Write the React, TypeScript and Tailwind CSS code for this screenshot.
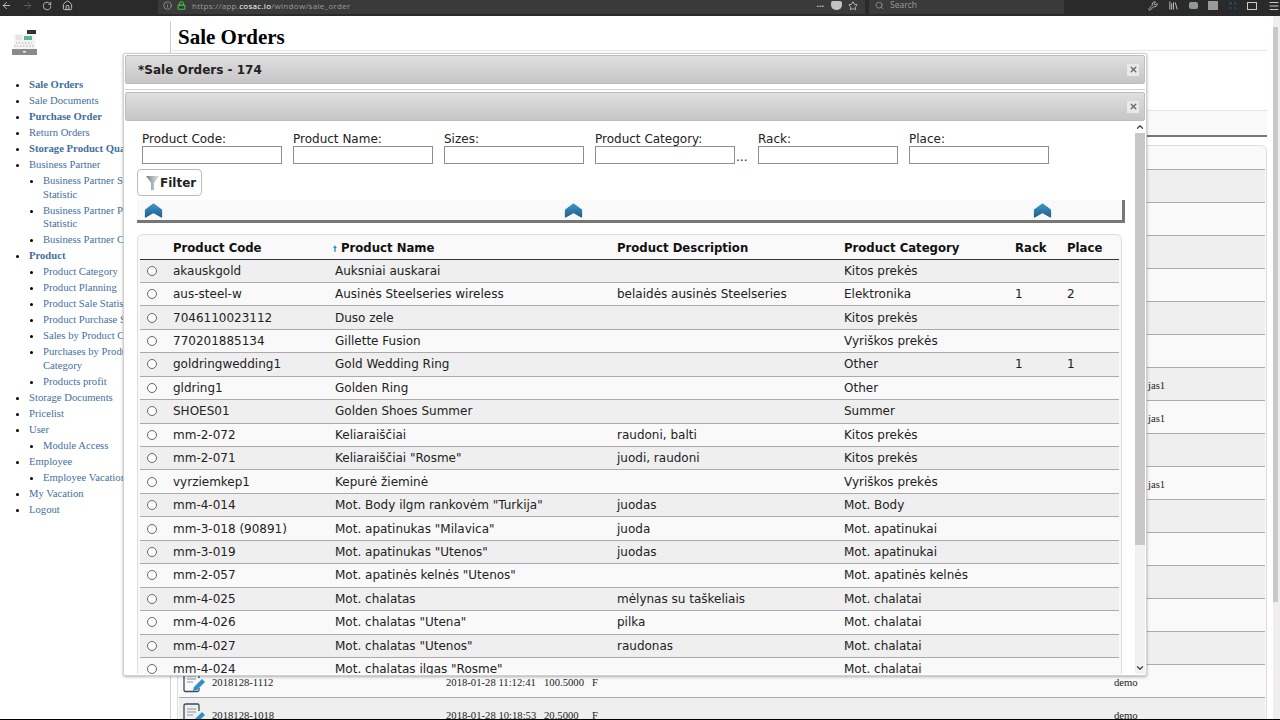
import { ArrowLeft, ArrowRight, ChevronDown, ChevronUp, Home, Info, Library, Lock, Menu, RotateCw, Search, Star, Wrench, X } from "lucide-react";

const products = [
  ["akauskgold", "Auksniai auskarai", "", "Kitos prekės", "", ""],
  ["aus-steel-w", "Ausinės Steelseries wireless", "belaidės ausinės Steelseries", "Elektronika", "1", "2"],
  ["7046110023112", "Duso zele", "", "Kitos prekės", "", ""],
  ["770201885134", "Gillette Fusion", "", "Vyriškos prekės", "", ""],
  ["goldringwedding1", "Gold Wedding Ring", "", "Other", "1", "1"],
  ["gldring1", "Golden Ring", "", "Other", "", ""],
  ["SHOES01", "Golden Shoes Summer", "", "Summer", "", ""],
  ["mm-2-072", "Keliaraiščiai", "raudoni, balti", "Kitos prekės", "", ""],
  ["mm-2-071", "Keliaraiščiai \"Rosme\"", "juodi, raudoni", "Kitos prekės", "", ""],
  ["vyrziemkep1", "Kepurė žieminė", "", "Vyriškos prekės", "", ""],
  ["mm-4-014", "Mot. Body ilgm rankovėm \"Turkija\"", "juodas", "Mot. Body", "", ""],
  ["mm-3-018 (90891)", "Mot. apatinukas \"Milavica\"", "juoda", "Mot. apatinukai", "", ""],
  ["mm-3-019", "Mot. apatinukas \"Utenos\"", "juodas", "Mot. apatinukai", "", ""],
  ["mm-2-057", "Mot. apatinės kelnės \"Utenos\"", "", "Mot. apatinės kelnės", "", ""],
  ["mm-4-025", "Mot. chalatas", "mėlynas su taškeliais", "Mot. chalatai", "", ""],
  ["mm-4-026", "Mot. chalatas \"Utena\"", "pilka", "Mot. chalatai", "", ""],
  ["mm-4-027", "Mot. chalatas \"Utenos\"", "raudonas", "Mot. chalatai", "", ""],
  ["mm-4-024", "Mot. chalatas ilgas \"Rosme\"", "", "Mot. chalatai", "", ""],
];

const fields = [
  { label: "Product Code:", gap: "mr-[11px]" },
  { label: "Product Name:", gap: "mr-[11px]" },
  { label: "Sizes:", gap: "mr-[11px]" },
  { label: "Product Category:", gap: "mr-[23px]", dots: true },
  { label: "Rack:", gap: "mr-[11px]" },
  { label: "Place:", gap: "" },
];

// rows of the table behind the dialog, only the right end of them shows
const orders = [
  {}, {}, {}, {}, {}, {},
  { user: "jas1" },
  { user: "jas1" },
  {},
  { user: "jas1" },
  {}, {}, {}, {}, {},
  { code: "2018128-1112", date: "2018-01-28 11:12:41", sum: "100.5000", by: "demo" },
  { code: "2018128-1018", date: "2018-01-28 10:18:53", sum: "20.5000", by: "demo" },
];

function CloseBox() {
  return (
    <div className="flex h-[12px] w-[12px] items-center justify-center bg-[#e9e9e9]">
      <X size={9} strokeWidth={4} className="text-[#6f6f6f]" />
    </div>
  );
}

function Chevron() {
  return (
    <svg width="19" height="15" viewBox="0 0 19 15">
      <defs>
        <linearGradient id="chev" x1="0" y1="0" x2="0" y2="1">
          <stop offset="0" stopColor="#3f94c6" />
          <stop offset="1" stopColor="#1f5f8f" />
        </linearGradient>
      </defs>
      <path d="M9.5 1 L17.5 7 V14 L9.5 9.5 L1.5 14 V7 Z" fill="url(#chev)" stroke="url(#chev)" strokeWidth="1.2" strokeLinejoin="round" />
    </svg>
  );
}

function Funnel() {
  return (
    <svg width="13" height="14" viewBox="0 0 13 14" className="mr-[1px]">
      <defs>
        <linearGradient id="fun" x1="0" y1="0" x2="1" y2="0">
          <stop offset="0" stopColor="#6f7f88" />
          <stop offset="0.5" stopColor="#aeb6ba" />
          <stop offset="1" stopColor="#dfe2e3" />
        </linearGradient>
      </defs>
      <path d="M0 0 H13 L8 7 V14 H5 V7 Z" fill="url(#fun)" />
    </svg>
  );
}

function DocIcon() {
  return (
    <svg width="24" height="24" viewBox="0 0 24 24" fill="none" className="shrink-0">
      <path d="M16 18 V20 Q16 21.5 14.5 21.5 H3 Q1 21.5 1 20 V2.5 Q1 1 3 1 H14.5 Q16 1 16 2.5 V8" stroke="#3d4a5c" strokeWidth="1.3" />
      <path d="M4 6 H13 M4 9 H13 M4 12 H10" stroke="#8a94a0" strokeWidth="1.2" />
      <path d="M10 21 L11 17 L19 9 L22 12 L14 20 Z" fill="#2f8fc9" />
    </svg>
  );
}

function Logo() {
  return (
    <svg width="26" height="27" viewBox="0 0 26 27">
      <rect x="2" y="5" width="21" height="15" fill="#f3f3f3" />
      <rect x="15" y="1" width="9" height="4" fill="#333" />
      <rect x="12" y="7" width="8" height="4" fill="#58b7a0" />
      <rect x="4" y="6" width="6" height="5" fill="#e6e6e6" />
      <path d="M4 14 h16" stroke="#d9a0a0" strokeWidth="1.2" strokeDasharray="1.5 1.5" />
      <path d="M2 17 h21" stroke="#a9b8a9" strokeWidth="1.2" strokeDasharray="1.5 1.5" />
      <rect x="0" y="20" width="25" height="6" fill="#8a8a8a" />
      <rect x="11" y="22" width="3" height="1.5" fill="#eee" />
    </svg>
  );
}

function BrowserBar() {
  return (
    <div className="flex h-[16px] shrink-0 items-center overflow-hidden bg-[#2a2a2a] pb-[5px] text-[#c9c9c9]">
      <ArrowLeft size={11} className="ml-[1px]" />
      <ArrowRight size={11} className="ml-[10px] text-[#5e5e5e]" />
      <RotateCw size={10} className="ml-[9px]" />
      <Home size={11} className="ml-[10px]" />
      <div className="ml-[85px] flex h-[16px] w-[707px] items-center bg-[#3a3a3a] pl-[5px]">
        <Info size={9} className="text-[#a0a0a0]" />
        <Lock size={9} strokeWidth={3} className="ml-[5px] text-[#3fc13f]" />
        <span className="ml-[6px] font-['Open_Sans',sans-serif] text-[8px] tracking-[0.3px] text-[#9a9a9a]">
          https://app.<span className="text-white">cosac.io</span>/window/sale_order
        </span>
        <span className="ml-auto text-[9px] font-bold leading-none">···</span>
        <div className="ml-[7px] h-[9px] w-[11px] rounded-b-[5px] rounded-t-[2px] bg-[#c2c2c2]" />
        <Star size={10} className="ml-[6px] mr-[7px]" />
      </div>
      <div className="ml-[4px] flex h-[16px] w-[195px] items-center bg-[#3a3a3a] pl-[6px] text-[#9a9a9a]">
        <Search size={9} />
        <span className="ml-[6px] font-['Open_Sans',sans-serif] text-[8.5px]">Search</span>
      </div>
      <Wrench size={10} className="ml-[84px]" />
      <Library size={11} className="ml-[10px]" />
      <div className="ml-[10px] h-[7px] w-[9px] rounded-[2px] bg-[#8e9a8e]" />
      <div className="ml-[10px] h-[9px] w-[10px] bg-[#9a9a9a]" />
      <div className="ml-[11px] grid h-[7px] w-[7px] grid-cols-2 gap-[2px]">
        <span className="bg-[#27415f]" />
        <span className="bg-[#27415f]" />
        <span className="bg-[#27415f]" />
        <span className="bg-[#27415f]" />
      </div>
      <div className="ml-[11px] h-[8px] w-[10px] border border-[#c9c9c9]" />
      <Menu size={12} className="ml-[11px]" />
    </div>
  );
}

function Sidebar() {
  const link = "text-[#3f6f9f]";
  return (
    <aside className="mt-[5px] w-[171px] shrink-0 border-r border-[#d0d0d0]">
      <div className="ml-[12px] mt-[8px]">
        <Logo />
      </div>
      <ul className="mt-[22px] w-[190px] list-disc pl-[29px] font-['Liberation_Serif',serif] text-[10.67px] leading-[13.5px] marker:text-black">
        <li className={`pb-[2.5px] font-bold ${link}`}>Sale Orders</li>
        <li className={`pb-[2.5px] ${link}`}>Sale Documents</li>
        <li className={`pb-[2.5px] font-bold ${link}`}>Purchase Order</li>
        <li className={`pb-[2.5px] ${link}`}>Return Orders</li>
        <li className={`pb-[2.5px] font-bold ${link}`}>Storage Product Quantity</li>
        <li className={`pb-[2.5px] ${link}`}>Business Partner</li>
        <ul className="list-disc pl-[14px]">
          <li className={`pb-[2.5px] ${link}`}>Business Partner Sale<br />Statistic</li>
          <li className={`pb-[2.5px] ${link}`}>Business Partner Purchase<br />Statistic</li>
          <li className={`pb-[2.5px] ${link}`}>Business Partner Contacts</li>
        </ul>
        <li className={`pb-[2.5px] font-bold ${link}`}>Product</li>
        <ul className="list-disc pl-[14px]">
          <li className={`pb-[2.5px] ${link}`}>Product Category</li>
          <li className={`pb-[2.5px] ${link}`}>Product Planning</li>
          <li className={`pb-[2.5px] ${link}`}>Product Sale Statistic</li>
          <li className={`pb-[2.5px] ${link}`}>Product Purchase Statistic</li>
          <li className={`pb-[2.5px] ${link}`}>Sales by Product Category</li>
          <li className={`pb-[2.5px] ${link}`}>Purchases by Product<br />Category</li>
          <li className={`pb-[2.5px] ${link}`}>Products profit</li>
        </ul>
        <li className={`pb-[2.5px] ${link}`}>Storage Documents</li>
        <li className={`pb-[2.5px] ${link}`}>Pricelist</li>
        <li className={`pb-[2.5px] ${link}`}>User</li>
        <ul className="list-disc pl-[14px]">
          <li className={`pb-[2.5px] ${link}`}>Module Access</li>
        </ul>
        <li className={`pb-[2.5px] ${link}`}>Employee</li>
        <ul className="list-disc pl-[14px]">
          <li className={`pb-[2.5px] ${link}`}>Employee Vacation</li>
        </ul>
        <li className={`pb-[2.5px] ${link}`}>My Vacation</li>
        <li className={`pb-[2.5px] ${link}`}>Logout</li>
      </ul>
    </aside>
  );
}

function MainPage() {
  return (
    <main className="min-w-0 flex-1 overflow-hidden px-[6px] font-['Liberation_Serif',serif] text-[10.67px] text-[#222]">
      <h1 className="-ml-[5px] h-[35px] border-b border-[#e6e6e6] pl-[6px] pt-[8px] text-[21px] font-bold leading-[26px] text-black">Sale Orders</h1>
      <div className="mt-[59px] h-[27px] border-b-[2px] border-[#777] border-t border-t-[#e6e6e6] bg-[#f9f9f9]" />
      <div className="mt-[8px] rounded-t-md border border-[#ddd] bg-[#f9f9f9] px-[1px] pt-[23px]">
        {orders.map((o, i) => (
          <div key={i} className={`flex h-[33px] items-center border-t border-[#aaa] pt-[2px] ${i % 2 === 0 ? "bg-[#efefef]" : "bg-[#f9f9f9]"}`}>
            <div className="ml-[4px] w-[29px]">{o.code && <DocIcon />}</div>
            <div className="w-[234px]">{o.code}</div>
            <div className="w-[98px]">{o.date}</div>
            <div className="w-[48px]">{o.sum}</div>
            <div className="w-[522px]">{o.code && "F"}</div>
            <div className="w-[34px]">{o.by}</div>
            <div>{o.user}</div>
          </div>
        ))}
      </div>
    </main>
  );
}

function ProductTable() {
  return (
    <div className="ml-[12px] mt-[11px] w-[985px] rounded-t-md border border-[#ddd] bg-[#f9f9f9] px-[2px] pt-[2px] font-['DejaVu_Sans',sans-serif] text-[12px] text-[#222]">
      <div className="flex h-[22.5px] items-center border-b border-[#333] pt-[2px] text-[11.7px] font-bold text-[#111]">
        <div className="w-[33px]" />
        <div className="w-[162px]">Product Code</div>
        <div className="flex w-[282px] items-center">
          <svg width="4" height="7" viewBox="0 0 5 8" className="-ml-[2px] mr-[4px]">
            <path d="M2.5 0 L5 3.5 H3.4 V8 H1.6 V3.5 H0 Z" fill="#2f8fc9" />
          </svg>
          Product Name
        </div>
        <div className="w-[227px]">Product Description</div>
        <div className="w-[171px]">Product Category</div>
        <div className="w-[52px]">Rack</div>
        <div>Place</div>
      </div>
      {products.map((p, i) => (
        <div key={p[0]} className={`flex h-[23.45px] items-center border-b border-[#aaa] ${i % 2 === 0 ? "bg-[#efefef]" : "bg-[#f9f9f9]"}`}>
          <div className="w-[33px] pl-[7px]">
            <div className="h-[10px] w-[10px] rounded-full border border-[#666] bg-white" />
          </div>
          <div className="w-[162px]">{p[0]}</div>
          <div className="w-[282px]">{p[1]}</div>
          <div className="w-[227px]">{p[2]}</div>
          <div className="w-[171px]">{p[3]}</div>
          <div className="w-[52px]">{p[4]}</div>
          <div>{p[5]}</div>
        </div>
      ))}
    </div>
  );
}

function OrderDialog() {
  return (
    <div className="absolute left-[123px] top-[53px] flex h-[623px] w-[1024px] flex-col rounded-[2px] border border-[#cfcfcf] bg-white p-[1px] shadow-[0_1px_3px_rgba(0,0,0,0.3)] font-['DejaVu_Sans',sans-serif]">
      <div className="flex h-[29px] shrink-0 items-center justify-between rounded-[2px] border border-[#bdbdbd] bg-gradient-to-b from-[#dfdfdf] to-[#c6c6c6] pl-[12px] pr-[5px] text-[12px] font-bold text-[#222]">
        <span className="pt-[1px]">*Sale Orders - 174</span>
        <CloseBox />
      </div>
      <div className="mt-[5px] flex min-h-0 flex-1 flex-col border-t border-[#cfcfcf] pt-[2px]">
        <div className="flex h-[29px] shrink-0 items-center justify-end rounded-[2px] border border-[#bdbdbd] bg-gradient-to-b from-[#dfdfdf] to-[#c6c6c6] pr-[5px]">
          <CloseBox />
        </div>
        <div className="flex min-h-0 flex-1">
          <div className="min-w-0 flex-1 overflow-hidden">
            <div className="flex pl-[17px] pt-[12px] text-[12px] leading-[13px] text-[#222]">
              {fields.map((f) => (
                <label key={f.label} className={`relative w-[140px] ${f.gap}`}>
                  {f.label}
                  <div className="h-[18px] w-[140px] border border-[#8f8f8f] bg-white" />
                  {f.dots && <span className="absolute left-[141px] top-[18px] text-[12px]">...</span>}
                </label>
              ))}
            </div>
            <button className="ml-[12px] mt-[5px] flex h-[27px] w-[65px] items-center rounded-[4px] border border-[#bbb] bg-white pl-[8px] text-[12px] font-bold text-[#222]">
              <Funnel />
              Filter
            </button>
            <div className="relative ml-[12px] mt-[4px] h-[23px] w-[988px] border-b-[3px] border-r-[3px] border-[#777] bg-[#f9f9f9]">
              <div className="absolute left-[7px] top-[3px]"><Chevron /></div>
              <div className="absolute left-[427px] top-[3px]"><Chevron /></div>
              <div className="absolute left-[896px] top-[3px]"><Chevron /></div>
            </div>
            <ProductTable />
          </div>
          <div className="flex w-[10px] shrink-0 flex-col bg-[#f1f1f1]">
            <div className="flex h-[12px] items-center justify-center bg-white">
              <ChevronUp size={10} strokeWidth={3} className="text-[#444]" />
            </div>
            <div className="h-[412px] bg-[#c8c8c8]" />
            <div className="flex-1" />
            <div className="flex h-[12px] items-center justify-center">
              <ChevronDown size={10} strokeWidth={3} className="text-[#444]" />
            </div>
          </div>
        </div>
      </div>
    </div>
  );
}

export default function App() {
  return (
    <div className="relative flex h-[720px] w-[1280px] flex-col overflow-hidden bg-white">
      <BrowserBar />
      <div className="flex min-h-0 flex-1">
        <Sidebar />
        <MainPage />
        {/* page scrollbar */}
        <div className="flex w-[7px] shrink-0 flex-col bg-[#f1eded]">
          <div className="h-[11px]" />
          <div className="h-[575px] w-[5px] bg-[#c8c8c8]" />
        </div>
      </div>
      <div className="h-px shrink-0 bg-black" />
      <OrderDialog />
    </div>
  );
}
